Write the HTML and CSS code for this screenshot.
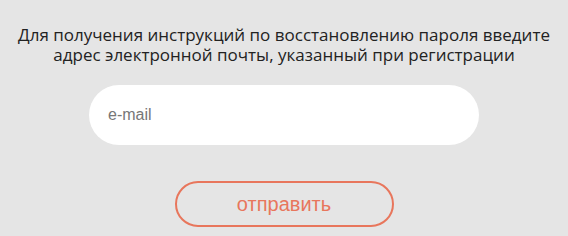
FILE: index.html
```html
<!DOCTYPE html>
<html lang="ru">
<head>
<meta charset="utf-8">
<link rel="stylesheet" href="styles.css">
</head>
<body>
<div class="page">
  <p class="intro">Для получения инструкций по восстановлению пароля введите<br>адрес электронной почты, указанный при регистрации</p>
  <input class="email" type="text" placeholder="e-mail">
  <button class="send" type="button">отправить</button>
</div>
</body>
</html>
```
FILE: styles.css
```css
html, body {
  margin: 0;
  padding: 0;
  background: #e5e5e5;
}
.page {
  width: 568px;
  height: 236px;
  display: flex;
  flex-direction: column;
  align-items: center;
  font-family: "Open Sans", "Liberation Sans", sans-serif;
}
.intro {
  margin: 25px 0 0;
  font-size: 17px;
  line-height: 20px;
  color: #222;
  text-align: center;
  letter-spacing: 0;
}
.email {
  margin-top: 20px;
  margin-left: 0;
  width: 390px;
  height: 60px;
  box-sizing: border-box;
  border: none;
  border-radius: 30px;
  background: #fff;
  padding: 0 0 0 19px;
  font-family: "Liberation Sans", Arial, sans-serif;
  font-size: 16px;
  color: #333;
  outline: none;
}
.email::placeholder {
  color: #777;
}
.send {
  margin-top: 36px;
  width: 219px;
  height: 46px;
  box-sizing: border-box;
  border: 2px solid #e8765c;
  border-radius: 23px;
  background: transparent;
  color: #e8765c;
  font-family: "Liberation Sans", Arial, sans-serif;
  font-size: 20px;
  padding: 0;
}
```
